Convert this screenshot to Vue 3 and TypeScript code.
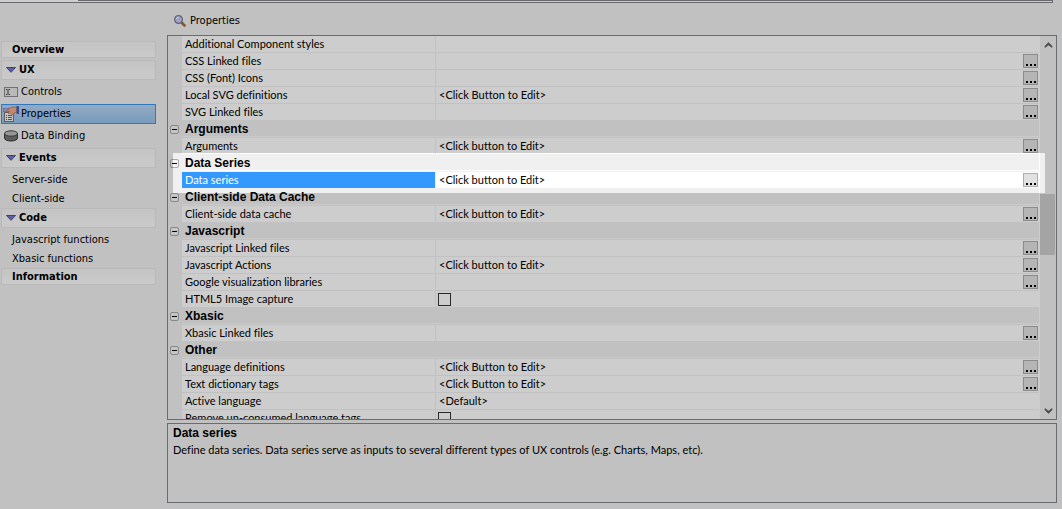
<script setup lang="ts">
import { ref } from 'vue'

type Kind = 'section' | 'item' | 'sub'
interface NavEntry { label: string; kind: Kind; icon?: 'controls' | 'properties' | 'data'; arrow?: boolean; selected?: boolean }
interface Row { name: string; value?: string; button?: boolean; check?: boolean; selected?: boolean }
interface Group { title?: string; rows: Row[] }

const nav: NavEntry[] = [
  { label: 'Overview', kind: 'section' },
  { label: 'UX', kind: 'section', arrow: true },
  { label: 'Controls', kind: 'item', icon: 'controls' },
  { label: 'Properties', kind: 'item', icon: 'properties', selected: true },
  { label: 'Data Binding', kind: 'item', icon: 'data' },
  { label: 'Events', kind: 'section', arrow: true },
  { label: 'Server-side', kind: 'sub' },
  { label: 'Client-side', kind: 'sub' },
  { label: 'Code', kind: 'section', arrow: true },
  { label: 'Javascript functions', kind: 'sub' },
  { label: 'Xbasic functions', kind: 'sub' },
  { label: 'Information', kind: 'section' },
]

const groups: Group[] = [
  {
    rows: [
      { name: 'Additional Component styles' },
      { name: 'CSS Linked files', button: true },
      { name: 'CSS (Font) Icons', button: true },
      { name: 'Local SVG definitions', value: '<Click Button to Edit>', button: true },
      { name: 'SVG Linked files', button: true },
    ],
  },
  { title: 'Arguments', rows: [{ name: 'Arguments', value: '<Click button to Edit>', button: true }] },
  { title: 'Data Series', rows: [{ name: 'Data series', value: '<Click button to Edit>', button: true, selected: true }] },
  { title: 'Client-side Data Cache', rows: [{ name: 'Client-side data cache', value: '<Click button to Edit>', button: true }] },
  {
    title: 'Javascript',
    rows: [
      { name: 'Javascript Linked files', button: true },
      { name: 'Javascript Actions', value: '<Click button to Edit>', button: true },
      { name: 'Google visualization libraries', button: true },
      { name: 'HTML5 Image capture', check: true },
    ],
  },
  { title: 'Xbasic', rows: [{ name: 'Xbasic Linked files', button: true }] },
  {
    title: 'Other',
    rows: [
      { name: 'Language definitions', value: '<Click Button to Edit>', button: true },
      { name: 'Text dictionary tags', value: '<Click Button to Edit>', button: true },
      { name: 'Active language', value: '<Default>' },
      { name: 'Remove un-consumed language tags', check: true },
    ],
  },
]

const collapsed = ref<Record<string, boolean>>({})
const toggle = (title: string) => { collapsed.value[title] = !collapsed.value[title] }
</script>

<template>
  <div class="page">
    <div class="tabstrip"><span class="tab"></span><span class="rail"></span></div>
    <div class="body">
      <nav class="nav">
        <a v-for="n in nav" :key="n.label" href="#" class="entry" :class="[n.kind, { arrow: n.arrow, selected: n.selected }]">
          <svg v-if="n.arrow" class="tri" width="10" height="6" viewBox="0 0 10 6"><path d="M0.5 0.5h9L5 5.3z" fill="#7377c8" stroke="#4c4f91" /></svg>
          <svg v-if="n.icon === 'controls'" class="ico" width="16" height="16" viewBox="0 0 16 16">
            <rect x="1.500" y="3.500" width="13" height="9" fill="#e8e7e6" stroke="#8c8a96" />
            <path d="M3 5.500h1.500M5.500 5.500H7M5 6v4M3 10.500h1.500M5.500 10.500H7" stroke="#444" fill="none" />
          </svg>
          <svg v-if="n.icon === 'properties'" class="ico" width="16" height="16" viewBox="0 0 16 16">
            <path d="M0 2h6v4H0z" fill="#6676d4" /><path d="M0 4h6M2 2v4M4 2v4" stroke="#dfe4ff" stroke-width=".6" />
            <rect x="1.500" y="6.500" width="9" height="9" fill="#f5f3ef" stroke="#777" />
            <path d="M3 9.500h1M5 9.500h4M3 11.500h1M5 11.500h4M3 13.500h1M5 13.500h4" stroke="#666" />
            <path d="M3 5l4-3 2-1h5v5l-3 1-1 2-3-2-1 1-1-1 2-2-3 1z" fill="#f0ab88" stroke="#b9755c" stroke-width=".8" />
            <path d="M13.500 0H16v8h-2.500z" fill="#4b5fae" />
          </svg>
          <svg v-if="n.icon === 'data'" class="ico" width="16" height="16" viewBox="0 0 16 16">
            <path d="M1.500 5.500v4.500c0 4 13 4 13 0V5.500z" fill="#747474" stroke="#383838" />
            <ellipse cx="8" cy="5.500" rx="6.500" ry="2.700" fill="#bcbcbc" stroke="#444" />
          </svg>
          <span>{{ n.label }}</span>
        </a>
      </nav>
      <main class="main">
        <h1 class="title">
          <svg width="12" height="12" viewBox="0 0 12 12">
            <path d="M7.500 7.500l3 3" stroke="#a06b42" stroke-width="2.600" stroke-linecap="round" />
            <circle cx="4.500" cy="4.500" r="3.900" fill="#c4caf8" stroke="#777b9c" stroke-width="1.200" />
            <path d="M2.500 4a2 2 0 0 1 2-2" stroke="#fff" fill="none" />
          </svg>
          <span>Properties</span>
        </h1>
        <section class="panel">
          <div class="view">
            <table class="grid">
              <colgroup><col class="c-gutter" /><col class="c-name" /><col /></colgroup>
              <tbody v-for="(g, gi) in groups" :key="gi">
                <tr v-if="g.title" class="head">
                  <td><button class="fold" type="button" :aria-label="'Toggle ' + g.title" @click="toggle(g.title)"></button></td>
                  <th colspan="2">{{ g.title }}</th>
                </tr>
                <template v-if="!g.title || !collapsed[g.title]">
                  <tr v-for="r in g.rows" :key="r.name" class="row" :class="{ selected: r.selected }">
                    <td></td>
                    <th class="name">{{ r.name }}</th>
                    <td class="value">
                      <div class="cell">
                        <input v-if="r.check" type="checkbox" class="check" :aria-label="r.name" />
                        <span v-else>{{ r.value }}</span>
                        <button v-if="r.button" class="more" type="button" :aria-label="'Edit ' + r.name">
                          <svg width="10" height="2" viewBox="0 0 10 2"><path d="M0 0h2v2H0zM4 0h2v2H4zM8 0h2v2H8z" /></svg>
                        </button>
                      </div>
                    </td>
                  </tr>
                </template>
              </tbody>
            </table>
          </div>
          <div class="scroll">
            <svg class="up" width="9" height="6" viewBox="0 0 9 6"><path d="M1 5.500v-1.500l3.500-3.500L8 4v1.500L4.500 3z" stroke="#606060" stroke-width=".6" /></svg>
            <div class="track"><div class="thumb"></div></div>
            <svg class="down" width="9" height="6" viewBox="0 0 9 6"><path d="M1 .5V2l3.500 3.500L8 2V.5L4.500 3z" stroke="#606060" stroke-width=".6" /></svg>
          </div>
          <div class="spotlight"></div>
        </section>
        <section class="help">
          <h2>Data series</h2>
          <p>Define data series. Data series serve as inputs to several different types of UX controls (e.g. Charts, Maps, etc).</p>
        </section>
      </main>
    </div>
  </div>
</template>

<style>
html, body { background: #f0f0f0; }
</style>

<style scoped>
* { box-sizing: border-box; }
.page { position: relative; display: flex; flex-direction: column; height: 100vh; overflow: hidden; background: #f0f0f0; color: #000; font: 11px/16px Lato, "Liberation Sans", sans-serif; font-variant-ligatures: none; }
.tabstrip { display: flex; height: 3px; margin-right: 9px; border-bottom: 1px solid #828288; border-right: 1px solid #828288; }
.tab { width: 78px; background: #fff; }
.rail { flex: 1; border-top: 1px solid #828288; background: #fff; }
.body { flex: 1; display: flex; min-height: 0; }
.nav { width: 167px; padding: 38px 11px 0 1px; font: 11px/16px "DejaVu Sans Condensed", Tahoma, sans-serif; }
.entry { display: flex; align-items: center; color: #000; text-decoration: none; white-space: nowrap; }
.section { height: 17px; padding: 1px 0 0 10px; border: 1px solid #e6e6e6; background: linear-gradient(#f4f4f4, #fcfcfc); font-weight: bold; }
.section.arrow { height: 20px; padding: 0 0 0 4px; gap: 3px; margin-bottom: 2px; }
.section:first-child { margin-bottom: 2px; }
.item { height: 20px; margin-bottom: 2px; padding-left: 1px; gap: 2px; border: 1px solid transparent; }
.item.selected { border-color: #3d97ec; background: linear-gradient(#b9d3ef, #94c2ef); }
.sub { height: 19px; padding-left: 11px; }
.main { flex: 1; min-width: 0; display: flex; flex-direction: column; padding: 8px 5px 6px 0; }
.title { display: flex; align-items: center; gap: 4px; margin: 0; height: 24px; padding: 0 0 5px 7px; font: 11px/16px "DejaVu Sans Condensed", Tahoma, sans-serif; }
.panel { position: relative; flex: 1; min-height: 0; display: flex; border: 1px solid #828790; }
.view { flex: 1; min-width: 0; overflow: hidden; border-right: 1px solid #fff; }
.grid { width: 100%; table-layout: fixed; border-collapse: separate; border-spacing: 0; }
.c-gutter { width: 14px; }
.c-name { width: 254px; }
.grid td, .grid th { height: 17px; padding: 0; line-height: 16px; text-align: left; white-space: nowrap; font-weight: normal; }
.grid .head th { padding-left: 3px; font-family: "Liberation Sans", Arial, sans-serif; font-size: 12px; line-height: 15px; font-weight: bold; box-shadow: inset 0 -1px #f0f0f0, inset 0 -2px #fcfcfc; }
.fold { display: block; width: 9px; height: 9px; margin: 0 0 0 2px; padding: 0; border: 1px solid #aaa; border-radius: 2px; background: #f6f6f6; }
.fold::after { content: ""; display: block; width: 5px; height: 1px; margin: 0 auto; background: #000; }
.row .name { padding-left: 3px; border-right: 1px solid #f0f0f0; border-bottom: 1px solid #f0f0f0; background: #fff; }
.row .value { border-bottom: 1px solid #f0f0f0; background: #fff; }
.row.selected .name { background: #39f; background-clip: padding-box; color: #fff; }
.cell { display: flex; align-items: center; justify-content: space-between; height: 16px; padding: 0 1px 0 3px; }
.more { width: 15px; height: 14px; display: flex; align-items: flex-end; justify-content: center; padding: 0 0 1px; border: 1px solid #adadad; background: #e1e1e1; }
.check { appearance: none; width: 13px; height: 13px; margin: 0 0 0 -1px; border: 1px solid #333; background: #fff; }
.scroll { width: 16px; display: flex; flex-direction: column; align-items: center; padding: 6px 0 5px; fill: #606060; }
.scroll svg { flex: none; }
.track { flex: 1; width: 100%; padding: 146px 1px 0 0; }
.thumb { height: 61px; background: #cdcdcd; }
.spotlight { position: absolute; left: 5px; right: 11px; top: 117px; height: 40px; box-shadow: 0 0 0 200vmax rgba(0, 0, 0, .196); pointer-events: none; }
.help { height: 80px; margin-top: 3px; padding: 1px 5px; border: 1px solid #828790; }
.help h2 { margin: 0; font-family: "Liberation Sans", Arial, sans-serif; font-size: 12px; line-height: 17px; }
.help p { margin: 0; line-height: 16px; }
</style>
